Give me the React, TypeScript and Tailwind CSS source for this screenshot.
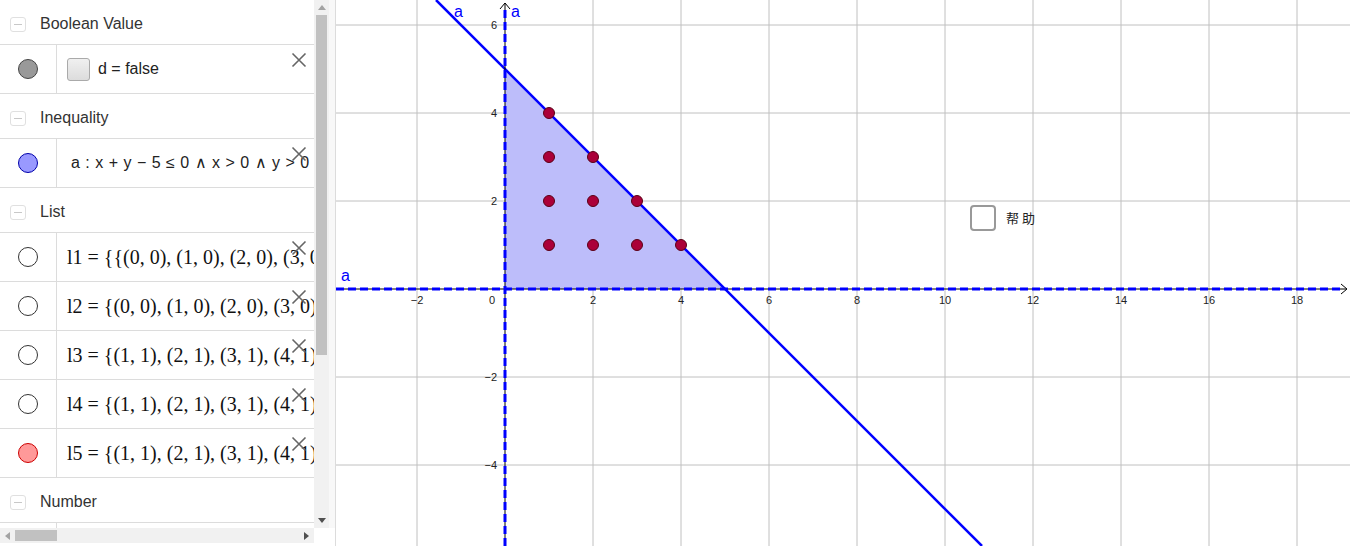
import React from 'react';

const O = { x: 505, y: 289 };
const U = 44;
const px = (v: number) => O.x + v * U;
const py = (v: number) => O.y - v * U;

type Row =
  | { kind: 'header'; label: string }
  | { kind: 'item'; dot: string; ring: string; content: React.ReactNode };

const serif = { fontFamily: '"Liberation Serif", "DejaVu Serif", serif' };

const rows: Row[] = [
  { kind: 'header', label: 'Boolean Value' },
  {
    kind: 'item',
    dot: 'bg-[#999999]',
    ring: 'border-[#444]',
    content: (
      <div className="flex items-center gap-2">
        <div className="h-[23px] w-[23px] rounded-[3px] border border-[#aaa] bg-gradient-to-b from-[#f0f0f0] to-[#dcdcdc]" />
        <span className="text-[16px] text-[#222]">d = false</span>
      </div>
    ),
  },
  { kind: 'header', label: 'Inequality' },
  {
    kind: 'item',
    dot: 'bg-[#9999ff]',
    ring: 'border-[#0000aa]',
    content: (
      <span className="pl-1 text-[16px] text-[#222] [word-spacing:1px]">
        a : x + y − 5 ≤ 0 ∧ x &gt; 0 ∧ y &gt; 0
      </span>
    ),
  },
  { kind: 'header', label: 'List' },
  {
    kind: 'item',
    dot: 'bg-white',
    ring: 'border-[#333]',
    content: <span className="text-[20px] text-[#111]" style={serif}>l1 = {'{{'}(0, 0), (1, 0), (2, 0), (3, 0), (4, 0)</span>,
  },
  {
    kind: 'item',
    dot: 'bg-white',
    ring: 'border-[#333]',
    content: <span className="text-[20px] text-[#111]" style={serif}>l2 = {'{'}(0, 0), (1, 0), (2, 0), (3, 0), (4, 0)</span>,
  },
  {
    kind: 'item',
    dot: 'bg-white',
    ring: 'border-[#333]',
    content: <span className="text-[20px] text-[#111]" style={serif}>l3 = {'{'}(1, 1), (2, 1), (3, 1), (4, 1)</span>,
  },
  {
    kind: 'item',
    dot: 'bg-white',
    ring: 'border-[#333]',
    content: <span className="text-[20px] text-[#111]" style={serif}>l4 = {'{'}(1, 1), (2, 1), (3, 1), (4, 1)</span>,
  },
  {
    kind: 'item',
    dot: 'bg-[#ff9999]',
    ring: 'border-[#cc0000]',
    content: <span className="text-[20px] text-[#111]" style={serif}>l5 = {'{'}(1, 1), (2, 1), (3, 1), (4, 1)</span>,
  },
  { kind: 'header', label: 'Number' },
  { kind: 'item', dot: '', ring: '', content: null },
];

function CloseIcon() {
  return (
    <svg width="16" height="16" viewBox="0 0 16 16" className="absolute right-[7px] top-[7px]">
      <path d="M1.5 1.5 L14.5 14.5 M14.5 1.5 L1.5 14.5" stroke="#666" strokeWidth="1.6" />
    </svg>
  );
}

function AlgebraRow({ row }: { row: Row }) {
  if (row.kind === 'header') {
    return (
      <div className="flex h-[45px] shrink-0 items-center border-b border-[#dcdcdc] pl-[10px] pt-[4px]">
        <div className="flex h-[15px] w-[16px] items-center justify-center rounded-[3px] border border-[#e0e0e0]">
          <div className="h-px w-[8px] bg-[#c8c8c8]" />
        </div>
        <span className="ml-[14px] text-[16px] text-[#333]">{row.label}</span>
      </div>
    );
  }
  return (
    <div className="relative flex h-[49px] shrink-0 border-b border-[#dcdcdc]">
      <div className="flex w-[57px] shrink-0 items-center justify-center border-r border-[#dcdcdc]">
        {row.dot && <div className={`h-[20px] w-[20px] rounded-full border ${row.dot} ${row.ring}`} />}
      </div>
      <div className="flex flex-1 items-center overflow-hidden whitespace-nowrap pl-[10px]">{row.content}</div>
      {row.content && <CloseIcon />}
    </div>
  );
}

function Graph() {
  const vlines = [-2, 2, 4, 6, 8, 10, 12, 14, 16, 18];
  const hlines = [6, 4, 2, -2, -4];
  const pts: [number, number][] = [
    [1, 4], [1, 3], [2, 3], [1, 2], [2, 2], [3, 2], [1, 1], [2, 1], [3, 1], [4, 1],
  ];
  const top = 289 / U;
  const bot = -(546 - 289) / U;
  const label = { fontFamily: '"Liberation Sans", Arial, sans-serif' };
  return (
    <svg className="absolute inset-0" width="1014" height="546" viewBox="336 0 1014 546">
      {vlines.map((v) => (
        <line key={`v${v}`} x1={px(v)} y1={0} x2={px(v)} y2={546} stroke="#c0c0c0" strokeWidth="1" />
      ))}
      {hlines.map((v) => (
        <line key={`h${v}`} x1={336} y1={py(v)} x2={1350} y2={py(v)} stroke="#c0c0c0" strokeWidth="1" />
      ))}
      <polygon points={`${px(0)},${py(0)} ${px(5)},${py(0)} ${px(0)},${py(5)}`} fill="#bdbdfa" />
      <line x1={px(5 - top)} y1={0} x2={px(5 - bot)} y2={546} stroke="#0000ff" strokeWidth="2.5" />

      {/* axes */}
      <line x1={336} y1={O.y} x2={1346} y2={O.y} stroke="#000" strokeWidth="1" />
      <line x1={O.x} y1={546} x2={O.x} y2={3} stroke="#000" strokeWidth="1" />
      <path d="M1341 284 L1347 289 L1341 294" fill="none" stroke="#000" strokeWidth="1" />
      <path d="M500 9 L505 3 L510 9" fill="none" stroke="#000" strokeWidth="1" />
      <line x1={336} y1={O.y} x2={1344} y2={O.y} stroke="#0000ff" strokeWidth="3" strokeDasharray="8 4" />
      <line x1={O.x} y1={546} x2={O.x} y2={6} stroke="#0000ff" strokeWidth="3" strokeDasharray="8 4" />

      {pts.map(([x, y]) => (
        <circle key={`${x}-${y}`} cx={px(x)} cy={py(y)} r="5.5" fill="#ab0038" stroke="#5a0015" strokeWidth="1" />
      ))}

      <g fill="#0000ff" fontSize="16" style={label}>
        <text x={454} y={17}>a</text>
        <text x={511} y={17}>a</text>
        <text x={341} y={281}>a</text>
      </g>

      <g fill="#222" fontSize="11" style={label}>
        {[-2, 2, 4, 6, 8, 10, 12, 14, 16, 18].map((v) => (
          <text key={`xl${v}`} x={px(v)} y={304} textAnchor="middle">
            {v < 0 ? `−${-v}` : v}
          </text>
        ))}
        <text x={492} y={304} textAnchor="middle">0</text>
        {hlines.map((v) => (
          <text key={`yl${v}`} x={497} y={py(v) + 4} textAnchor="end">
            {v < 0 ? `−${-v}` : v}
          </text>
        ))}
      </g>
    </svg>
  );
}

export default function App() {
  return (
    <div
      className="flex h-[546px] w-[1350px] overflow-hidden bg-white"
      style={{ fontFamily: '"Liberation Sans", Arial, sans-serif' }}
    >
      <div className="flex w-[336px] shrink-0 flex-col border-r border-[#dcdcdc]">
        <div className="flex h-[528px]">
          <div className="flex w-[314px] flex-col overflow-hidden">
            {rows.map((r, i) => (
              <AlgebraRow key={i} row={r} />
            ))}
          </div>
          <div className="flex w-[15px] flex-col items-center bg-[#f1f1f1]">
            <div className="mt-[5px] h-0 w-0 border-x-[4px] border-b-[5px] border-x-transparent border-b-[#a3a3a3]" />
            <div className="mt-[5px] h-[340px] w-[11px] bg-[#c1c1c1]" />
            <div className="flex-1" />
            <div className="mb-[5px] h-0 w-0 border-x-[4px] border-t-[5px] border-x-transparent border-t-[#505050]" />
          </div>
          <div className="w-[6px] bg-[#f8f8f8]" />
        </div>
        <div className="flex h-[15px] w-[314px] items-center bg-[#f1f1f1]">
          <div className="ml-[5px] h-0 w-0 border-y-[4px] border-r-[5px] border-y-transparent border-r-[#a3a3a3]" />
          <div className="ml-[5px] h-[11px] w-[42px] bg-[#c1c1c1]" />
          <div className="flex-1" />
          <div className="mr-[5px] h-0 w-0 border-y-[4px] border-l-[5px] border-y-transparent border-l-[#505050]" />
        </div>
      </div>

      <div className="relative flex-1">
        <Graph />
        <div className="absolute left-[634px] top-[205px] flex items-center gap-[10px]">
          <div className="h-[26px] w-[26px] rounded-[4px] border-2 border-[#999] bg-white" />
          <span
            className="text-[13px] tracking-[3px] text-[#222]"
            style={{ fontFamily: '"Noto Sans CJK SC", sans-serif' }}
          >
            帮助
          </span>
        </div>
      </div>
    </div>
  );
}
